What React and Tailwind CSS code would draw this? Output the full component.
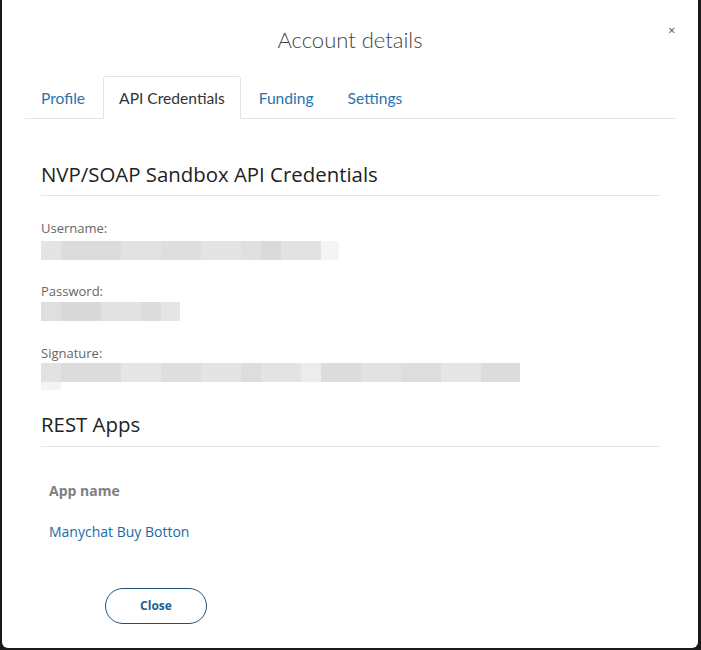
import React from "react";

function Bar({ segs, className }) {
  return (
    <div className={"flex h-[19px] " + (className || "")}>
      {segs.map((s, i) => (
        <div key={i} style={{ width: s[0], background: s[1] }} />
      ))}
    </div>
  );
}

export default function App() {
  return (
    <div className="w-[701px] h-[650px] bg-[#1a1a1a] overflow-hidden" style={{ fontFamily: '"Open Sans", sans-serif' }}>
      <div className="relative ml-[2px] w-[696px] h-[648px] bg-white rounded-b-[6px]">
        <button className="absolute left-[666px] top-[24px] text-[#555] text-[13px] leading-none">×</button>
        <h1 className="pt-[25px] text-center text-[22px] leading-[30px] text-[#444] font-light" style={{ fontFamily: 'Lato, sans-serif', fontWeight: 300 }}>
          Account details
        </h1>
        <div className="ml-[23px] mr-[22px] mt-[22px] flex items-end border-b border-[#e5e5e5] h-[42px] text-[15.6px]" style={{ fontFamily: 'Lato, sans-serif' }}>
          <div className="px-[16px] pt-[2px] h-[41px] flex items-center text-[#2a73b0]">Profile</div>
          <div className="ml-[2px] px-[15px] pt-[2px] h-[43px] -mb-px flex items-center text-[#333] bg-white border border-b-0 border-[#e2e2e2] rounded-t-[3px]">API Credentials</div>
          <div className="px-[18px] pt-[2px] h-[41px] flex items-center text-[#2a73b0]">Funding</div>
          <div className="pl-[16px] pr-[17px] pt-[2px] h-[41px] flex items-center text-[#2a73b0]">Settings</div>
        </div>
        <div className="ml-[39px] mr-[38px]">
          <h2 className="mt-[42px] text-[20.4px] leading-[26px] text-[#222] pb-[8px] border-b border-[#e5e5e5]">
            NVP/SOAP Sandbox API Credentials
          </h2>
          <div className="mt-[23px] text-[13px] leading-[18px] text-[#666]">Username:</div>
          <Bar className="mt-[4px]" segs={[[20, "#e4e4e4"], [60, "#dcdcdc"], [40, "#e2e2e2"], [40, "#dedede"], [40, "#e4e4e4"], [20, "#e0e0e0"], [20, "#dadada"], [40, "#e2e2e2"], [18, "#f4f4f4"]]} />
          <div className="mt-[22px] text-[13px] leading-[18px] text-[#666]">Password:</div>
          <Bar className="mt-[2px]" segs={[[20, "#dfdfdf"], [40, "#d9d9d9"], [40, "#e2e2e2"], [20, "#dcdcdc"], [19, "#e5e5e5"]]} />
          <div className="mt-[23px] text-[13px] leading-[18px] text-[#666]">Signature:</div>
          <Bar className="mt-[1px]" segs={[[20, "#e2e2e2"], [60, "#dcdcdc"], [40, "#e6e6e6"], [40, "#dedede"], [40, "#e4e4e4"], [20, "#dddddd"], [40, "#e3e3e3"], [20, "#ececec"], [40, "#dcdcdc"], [40, "#e2e2e2"], [40, "#dddddd"], [40, "#e6e6e6"], [39, "#dcdcdc"]]} />
          <div className="h-[8px] flex">
            <div className="w-[20px] bg-[#f4f4f4]" />
          </div>
          <h2 className="mt-[21px] text-[20.4px] leading-[26px] text-[#222] pb-[9px] border-b border-[#e5e5e5]">REST Apps</h2>
          <div className="ml-[8px] mt-[34px] text-[14px] font-bold text-[#808080] leading-[20px]">App name</div>
          <div className="ml-[8px] mt-[21px] text-[14px] text-[#1a6aa8] leading-[20px]">Manychat Buy Botton</div>
          <button className="ml-[64px] mt-[46px] w-[102px] h-[36px] rounded-full border border-[#20507a] text-[#1d5f96] text-[12px] font-bold">
            Close
          </button>
        </div>
      </div>
    </div>
  );
}
